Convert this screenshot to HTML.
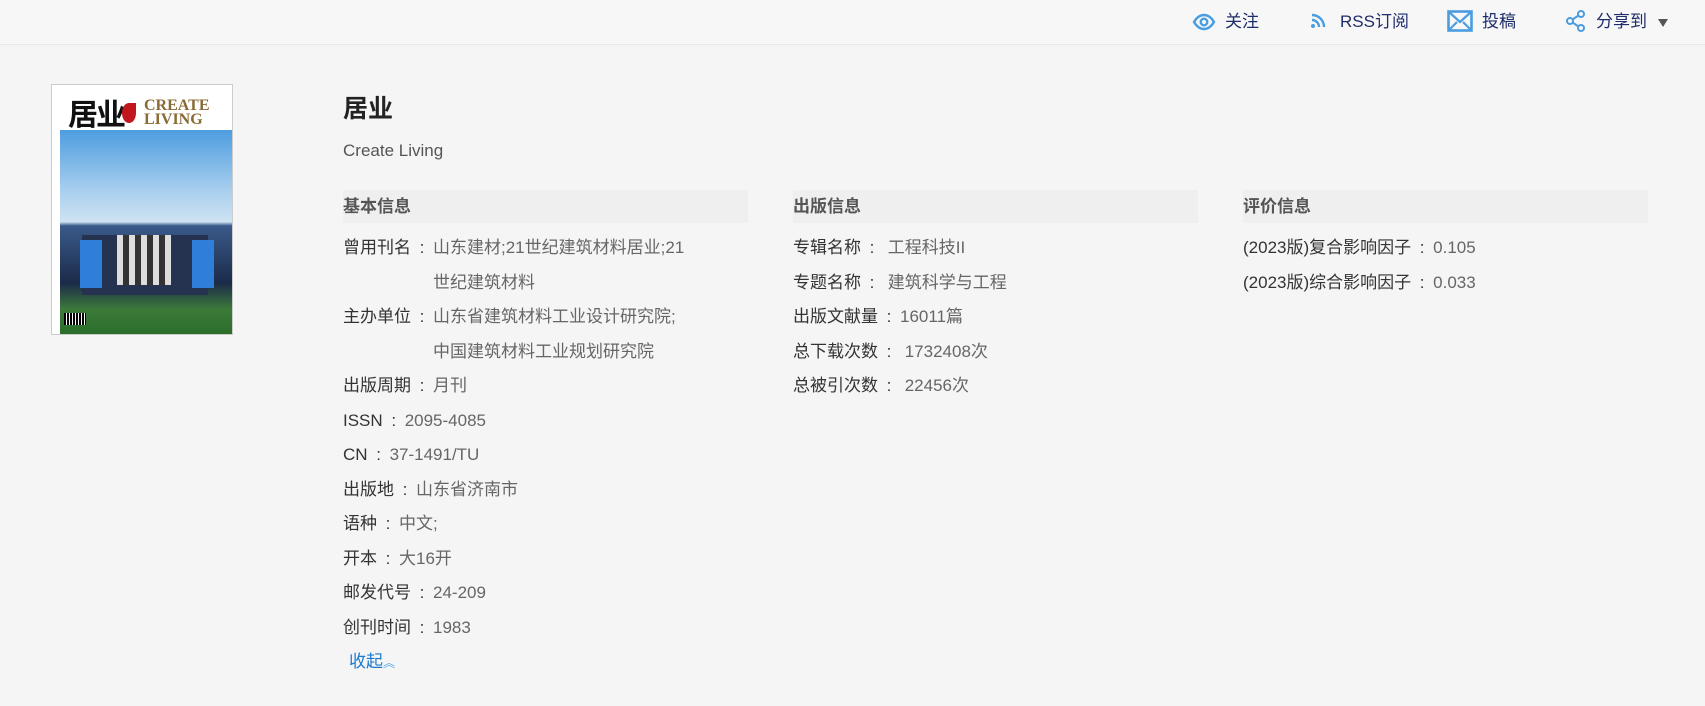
<!DOCTYPE html>
<html><head><meta charset="utf-8"><style>
*{margin:0;padding:0;box-sizing:border-box}
body{width:1705px;height:706px;background:#f5f5f5;font-family:"Liberation Sans","Noto Sans CJK SC",sans-serif;position:relative;overflow:hidden;color:#333}
.top{position:absolute;left:0;top:0;width:1705px;height:45px;background:#f7f7f7;border-bottom:1px solid #e8e8e8}
.ti{position:absolute;top:10px;font-size:17px;color:#1f2d6b;line-height:24px}
.abs{position:absolute}
.sec{position:absolute;top:190px;width:405px;height:33px;background:#efefef;font-size:17px;font-weight:bold;color:#555;line-height:33px;padding-left:0}
.col{position:absolute;top:231px;font-size:17px;line-height:34.5px}
.col .l{color:#333}.col .v{color:#666}
.c{display:inline-block;width:22px;text-align:center;color:#333}
.ind{padding-left:90px}
</style></head><body>
<div class="top">
<svg class="abs" style="left:1192px;top:10px" width="24" height="24" viewBox="0 0 24 24"><path d="M2 12c3-5 6.5-7 10-7s7 2 10 7c-3 5-6.5 7-10 7S5 17 2 12z" fill="none" stroke="#4a9de0" stroke-width="2.4"/><circle cx="12" cy="12" r="3.3" fill="none" stroke="#4a9de0" stroke-width="2.4"/></svg>
<div class="ti" style="left:1225px">关注</div>
<svg class="abs" style="left:1310px;top:13px" width="16" height="16" viewBox="0 0 16 16"><circle cx="3" cy="13" r="2" fill="#4a9de0"/><path d="M2 7a7 7 0 0 1 7 7M2 2a12 12 0 0 1 12 12" fill="none" stroke="#4a9de0" stroke-width="2.4"/></svg>
<div class="ti" style="left:1340px">RSS订阅</div>
<svg class="abs" style="left:1447px;top:10px" width="26" height="22" viewBox="0 0 26 22"><rect x="1.5" y="1.5" width="23" height="19" fill="none" stroke="#4a9de0" stroke-width="2.6"/><path d="M2 2l11 10 11-10M2 20l8-8M24 20l-8-8" fill="none" stroke="#4a9de0" stroke-width="2.2"/></svg>
<div class="ti" style="left:1482px">投稿</div>
<svg class="abs" style="left:1566px;top:10px" width="20" height="22" viewBox="0 0 20 22"><circle cx="15" cy="4" r="3" fill="none" stroke="#4a9de0" stroke-width="2"/><circle cx="4" cy="11" r="3" fill="none" stroke="#4a9de0" stroke-width="2"/><circle cx="15" cy="18" r="3" fill="none" stroke="#4a9de0" stroke-width="2"/><path d="M6.5 9.5l6-4M6.5 12.5l6 4" stroke="#4a9de0" stroke-width="2"/></svg>
<div class="ti" style="left:1596px">分享到</div>
<svg class="abs" style="left:1657px;top:18px" width="12" height="10" viewBox="0 0 12 10"><path d="M1 1h10L6 9z" fill="#555"/></svg>
</div>

<div class="abs" style="left:51px;top:84px;width:182px;height:251px;background:#fff;border:1px solid #ccc">
 <div class="abs" style="left:16px;top:12px;font-size:30px;font-weight:bold;color:#111;letter-spacing:-2px;font-family:'Noto Sans CJK SC',sans-serif;line-height:30px">居业</div>
 <div class="abs" style="left:70px;top:18px;width:14px;height:20px;background:#c0161c;border-radius:50% 0 50% 50%"></div>
 <div class="abs" style="left:92px;top:14px;font-family:'Liberation Serif',serif;font-weight:bold;color:#8a6a35;font-size:16px;line-height:14px">CREATE<br>LIVING</div>
 <div class="abs" style="left:8px;top:45px;width:172px;height:204px;background:linear-gradient(#4d9de0 0%,#a9cfee 30%,#cfe3f3 45%,#3a5a8a 47%,#1c2b4a 75%,#3d7a3a 88%,#2a6e2a 100%)"></div>
 <div class="abs" style="left:30px;top:150px;width:126px;height:60px;background:#253350"></div>
 <div class="abs" style="left:28px;top:155px;width:22px;height:48px;background:#2f7fd8"></div>
 <div class="abs" style="left:140px;top:155px;width:22px;height:48px;background:#2f7fd8"></div>
 <div class="abs" style="left:65px;top:150px;width:55px;height:50px;background:repeating-linear-gradient(90deg,#ddd 0 6px,#333 6px 12px)"></div>
 <div class="abs" style="left:12px;top:228px;width:22px;height:12px;background:repeating-linear-gradient(90deg,#000 0 2px,#fff 2px 3px)"></div>
</div>

<div class="abs" style="left:343px;top:93px;font-size:25px;font-weight:bold;color:#222;line-height:32px">居业</div>
<div class="abs" style="left:343px;top:139px;font-size:17px;color:#555;line-height:24px">Create Living</div>

<div class="sec" style="left:343px">基本信息</div>
<div class="sec" style="left:793px">出版信息</div>
<div class="sec" style="left:1243px">评价信息</div>

<div class="col" style="left:343px;width:400px">
<div><span class="l">曾用刊名</span><span class="c">:</span><span class="v">山东建材;21世纪建筑材料居业;21</span></div>
<div class="ind v">世纪建筑材料</div>
<div><span class="l">主办单位</span><span class="c">:</span><span class="v">山东省建筑材料工业设计研究院;</span></div>
<div class="ind v">中国建筑材料工业规划研究院</div>
<div><span class="l">出版周期</span><span class="c">:</span><span class="v">月刊</span></div>
<div><span class="l">ISSN</span><span class="c">:</span><span class="v">2095-4085</span></div>
<div><span class="l">CN</span><span class="c">:</span><span class="v">37-1491/TU</span></div>
<div><span class="l">出版地</span><span class="c">:</span><span class="v">山东省济南市</span></div>
<div><span class="l">语种</span><span class="c">:</span><span class="v">中文;</span></div>
<div><span class="l">开本</span><span class="c">:</span><span class="v">大16开</span></div>
<div><span class="l">邮发代号</span><span class="c">:</span><span class="v">24-209</span></div>
<div><span class="l">创刊时间</span><span class="c">:</span><span class="v">1983</span></div>
<div style="padding-left:6px;color:#1a7ad0">收起<span style="font-size:12px;color:#5aa8e8">︽</span></div>
</div>

<div class="col" style="left:793px;width:400px">
<div><span class="l">专辑名称</span><span class="c">:</span><span class="v"> 工程科技II</span></div>
<div><span class="l">专题名称</span><span class="c">:</span><span class="v"> 建筑科学与工程</span></div>
<div><span class="l">出版文献量</span><span class="c">:</span><span class="v">16011篇</span></div>
<div><span class="l">总下载次数</span><span class="c">:</span><span class="v"> 1732408次</span></div>
<div><span class="l">总被引次数</span><span class="c">:</span><span class="v"> 22456次</span></div>
</div>

<div class="col" style="left:1243px;width:400px">
<div><span class="l">(2023版)复合影响因子</span><span class="c">:</span><span class="v">0.105</span></div>
<div><span class="l">(2023版)综合影响因子</span><span class="c">:</span><span class="v">0.033</span></div>
</div>
</body></html>
